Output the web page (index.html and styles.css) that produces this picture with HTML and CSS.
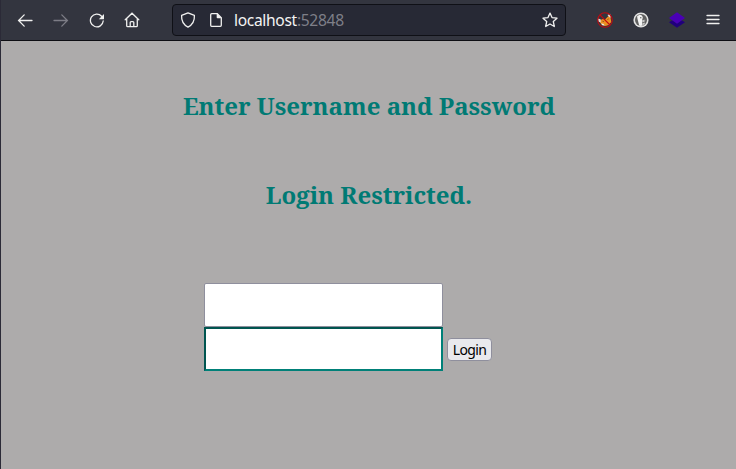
FILE: index.html
```html
<!DOCTYPE html>
<html lang="en">
<head>
<meta charset="utf-8">
<title>Login</title>
<link rel="stylesheet" href="styles.css">
</head>
<body>
<header class="toolbar">
  <nav class="nav">
    <svg class="icon" viewBox="0 0 16 16"><path d="M15 8.5H1.8M7.2 2.9 1.6 8.5l5.6 5.6"/></svg>
    <svg class="icon disabled" viewBox="0 0 16 16"><path d="M1 8.5h13.2M8.8 2.9 14.4 8.5l-5.6 5.6"/></svg>
    <svg class="icon" viewBox="0 0 16 16"><path d="M12.6 4.2A6.4 6.4 0 1 0 14.2 9"/><path class="solid" d="M15 2v5.2H9.8z"/></svg>
    <svg class="icon home" viewBox="0 0 16 16"><path d="M1.2 7.8 8 1.2l6.8 6.6M2.7 6.8v6.9q0 1 1 1h8.6q1 0 1-1V6.8M6.2 14.5v-4q0-.9.9-.9h1.8q.9 0 .9.9v4"/></svg>
  </nav>
  <div class="urlbar">
    <svg class="icon" viewBox="0 0 16 16"><path d="M8 .9 14.4 3.3C14.7 8.5 12.6 12.8 8 15.1 3.4 12.8 1.3 8.5 1.6 3.3z" stroke-linejoin="round"/></svg>
    <svg class="icon page" viewBox="0 0 16 16"><path d="M3.7 1.7h5.6l4 4v7.6q0 1-1 1H3.7q-1 0-1-1V2.7q0-1 1-1z"/><path class="solid" d="M8.7 1.2 13.8 6.3H9.5q-.8 0-.8-.8z"/></svg>
    <span class="url">localhost<span class="port">:52848</span></span>
    <svg class="icon" viewBox="0 0 16 16"><path d="m8 1.1 2 4.5 5 .6-3.7 3.3 1 5L8 12l-4.3 2.5 1-5L1 6.2l5-.6z" stroke-linejoin="round"/></svg>
  </div>
  <div class="extensions">
    <svg class="ext" viewBox="0 0 16 16"><path d="M3.2 8 6 7 8 7.5 11.5 4 13.5 5.5 14.3 10 11.5 13 8.5 14 5 13 3 10.5z" fill="#ec9021"/><path d="m.8 6.6 2.8.6.2 3.4-2.2-.8zM10.5 3l2.6-1.2.8 3.6-1.6-.2z" fill="#e4dcd6"/><path d="m4 11.6 2.4.2 1.4 1.8-2.4-.4z" fill="#eee"/><path d="m5.4 9.2 1.6.4M10.3 7.6l1.5-.7" stroke="#8a4a1c" stroke-width=".8"/><circle cx="8" cy="8" r="7.3" fill="none" stroke="#c00a10" stroke-width="1.1"/><path d="m3 3 10 10" stroke="#c00a10" stroke-width="1.1"/></svg>
    <svg class="ext" viewBox="0 0 16 16"><circle cx="8" cy="8" r="7.6" fill="#e2e2e2"/><circle cx="8" cy="8" r="6" fill="#606060"/><path d="M4.1 4.3 6.5 2.7q3 .2 3.3 3.1L9 8.2l.6 5.4q-2 .6-3.4 0L4.5 7z" fill="#f4f4f4"/><path d="M9 8.3q2-.7 3.8-.3l-2 1.1 1.5.8L9.3 10zM9.8 11l2-.5v2l-2 .5z" fill="#c5c5c5"/><circle cx="7.8" cy="5.7" r=".7" fill="#555"/></svg>
    <svg class="ext" viewBox="0 0 16 16"><path d="m0 10.2 2.8-1.8h10.4l2.8 1.8L8 15.8z" fill="#20007b"/><path d="m8 .2 8 5.8-8 5.8L0 6z" fill="#4a00b5"/></svg>
    <svg class="icon" viewBox="0 0 16 16"><path d="M2 3.5h12M2 7.5h12M2 11.5h12"/></svg>
  </div>
</header>
<main class="page-body">
  <h2>Enter Username and Password</h2>
  <h2>Login Restricted.</h2>
  <form class="login">
    <input class="user" type="text" aria-label="Username">
    <div class="row">
      <input class="password" type="password" aria-label="Password">
      <button type="button">Login</button>
    </div>
  </form>
</main>
</body>
</html>
```
FILE: styles.css
```css
* { box-sizing: border-box; }
body {
  margin: 0;
  height: 469px;
  overflow: hidden;
  background: #adabab;
  border-left: 1px solid #2b2a37;
}
.toolbar {
  display: flex;
  height: 41px;
  padding: 4px 15px 4px 16px;
  background: #33353f;
  border-bottom: 1px solid #0e0e13;
}
.nav, .extensions { display: flex; align-items: center; gap: 20px; }
.icon, .ext { width: 16px; height: 16px; flex: none; }
.icon { fill: none; stroke: #f0f0ef; stroke-width: 1.3; stroke-linecap: round; }
.icon .solid { fill: #f0f0ef; stroke: none; }
.disabled { stroke: #7d7d86; }
.home { margin-left: -1px; }
.urlbar {
  display: flex;
  align-items: center;
  width: 394px;
  height: 32px;
  margin: 0 31px 0 32px;
  padding: 0 7px;
  background: #272935;
  border: 1px solid #0f1016;
  border-radius: 4px;
}
.page { margin-left: 12px; }
.url {
  flex: 1;
  margin-left: 10px;
  color: #f4f4f3;
  font: 15.6px/20px "Noto Sans", sans-serif;
  letter-spacing: -0.33px;
}
.port { color: #7e7f88; }
.page-body { padding-top: 48px; }
h2 {
  margin: 0 0 56px;
  padding-left: 1px;
  color: #007a74;
  font: bold 24px/33px "Noto Serif", "Droid Serif", "DejaVu Serif", serif;
  text-align: center;
}
.login { margin: 72px 0 0 203px; }
input {
  display: block;
  width: 239px;
  height: 44px;
  padding: 0 4px;
  background: #fff;
  border: 1px solid #8f8f9d;
  border-radius: 2px;
  outline: none;
}
.password { border: 2px solid; border-color: #005550 #008078 #008078 #005550; border-radius: 0; }
.row { display: flex; align-items: center; gap: 4px; }
button {
  width: 45px;
  height: 23px;
  padding: 1px 0 0;
  background: #e9e9ed;
  border: 1px solid #8f8f9d;
  border-radius: 4px;
  color: #000;
  font: 14px/20px "Noto Sans", sans-serif;
  letter-spacing: -0.6px;
}
```
